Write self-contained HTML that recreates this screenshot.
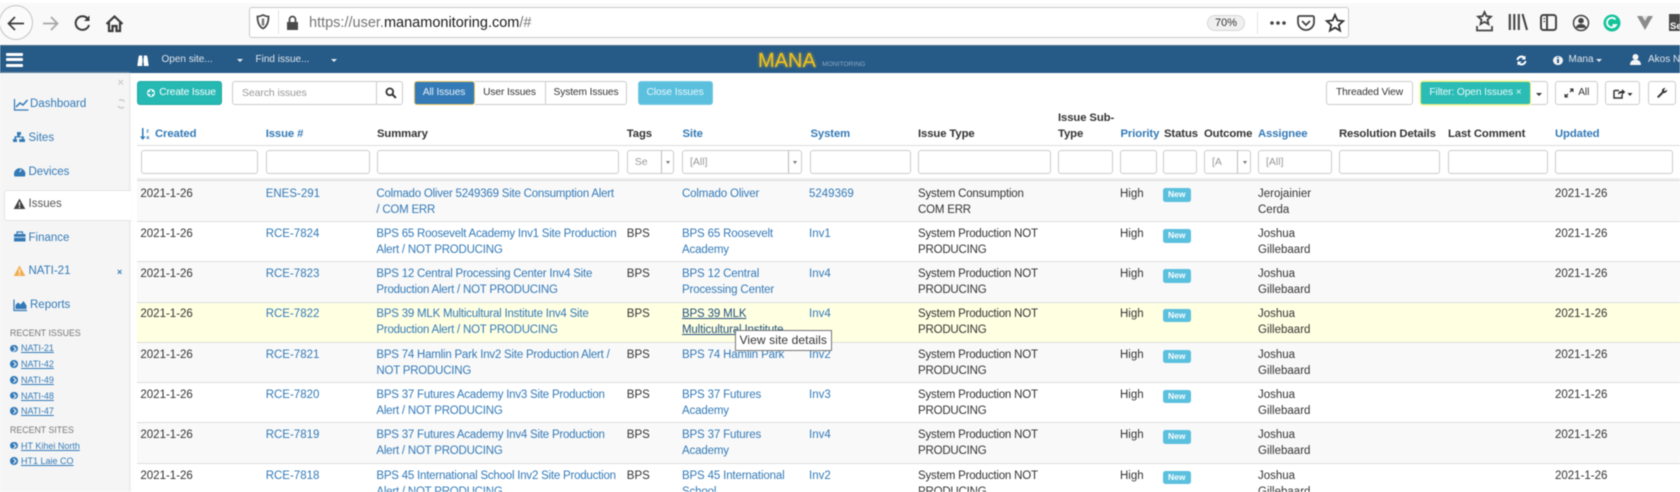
<!DOCTYPE html>
<html><head><meta charset="utf-8"><title>MANA Monitoring</title>
<style>
html,body{margin:0;padding:0;width:1680px;height:492px;overflow:hidden;background:#fff}
*{box-sizing:border-box}
#w{position:relative;width:1680px;height:492px;overflow:hidden;font-family:"Liberation Sans",sans-serif;font-size:11.5px;color:#333;filter:blur(.45px);background:#fff}
.a{position:absolute;white-space:nowrap}
svg{position:absolute;overflow:visible}
#tb{position:absolute;left:0;top:3px;width:1680px;height:42px;background:#f9f9f9}
#nav{position:absolute;left:0;top:45px;width:1680px;height:28px;background:#265a87;border-top:1px solid #4a6c88}
.nt{color:#dfe6ec;font-size:10px;top:54px;line-height:12px}
.car{position:absolute;width:0;height:0;border-left:3px solid transparent;border-right:3px solid transparent;border-top:3px solid #e6ecf1}
.btn{position:absolute;top:81px;height:24px;border:1px solid #ccc;border-radius:3px;background:#fff;font-size:10.2px;letter-spacing:-.1px;line-height:22px;text-align:center;color:#333;white-space:nowrap}
.th{position:absolute;font-weight:bold;font-size:11.3px;letter-spacing:-.1px;line-height:16.3px;white-space:nowrap;top:126px;color:#333}
.bl{color:#337ab7}
.f{position:absolute;top:150px;height:23.5px;border:1px solid #ccc;border-radius:3px;background:#fff;color:#999;font-size:10.5px;line-height:22px;padding-left:7px;white-space:nowrap;overflow:hidden}
.d{position:absolute;top:0;bottom:0;width:1px;background:#bbb}
.fc{position:absolute;top:10px;width:0;height:0;border-left:2.5px solid transparent;border-right:2.5px solid transparent;border-top:3px solid #777}
#sb{position:absolute;left:0;top:73px;width:129px;height:419px;background:#f5f5f5;box-shadow:1px 0 2px #ddd}
.n{position:absolute;left:30px;color:#337ab7;font-size:11.5px;line-height:14px;white-space:nowrap}
.h5{position:absolute;left:10px;font-size:8.8px;color:#777;line-height:10px;white-space:nowrap}
.rl{position:absolute;left:21px;font-size:9px;color:#337ab7;text-decoration:underline;line-height:10px;white-space:nowrap}
.o{position:absolute;left:10px;width:7.5px;height:7.5px;border-radius:50%;background:#337ab7}
.o:after{content:"";position:absolute;left:1.5px;top:2px;width:2.5px;height:2.5px;border-top:1px solid #fff;border-right:1px solid #fff;transform:rotate(45deg)}
.r{position:absolute;left:137px;width:1543px;border-top:1px solid #ddd}
.c{position:absolute;top:4px;line-height:16px;white-space:nowrap;color:#333}
.c1{left:3.4px}.c2{left:128.7px}.c3{left:239.4px;letter-spacing:-.22px}.c4{left:489.8px}.c5{left:545px;letter-spacing:-.15px}.c6{left:672px}.c7{left:781px;letter-spacing:-.2px}.c8{left:983px}.c10{left:1121px}.c11{left:1418px}
.l{color:#337ab7}
.nw{position:absolute;left:1026px;top:7px;width:27.5px;height:13.5px;border-radius:2.5px;background:#5bc0de;color:#fff;font-weight:bold;font-size:8.5px;line-height:13px;text-align:center}
</style></head><body><div id="w">

<div id="tb"></div>
<div class="a" style="left:-1px;top:5px;width:34px;height:35px;border-radius:50%;border:1px solid #c4c4c4;background:#fbfbfb"></div>
<svg style="left:0;top:0" width="140" height="46" fill="none" stroke="#3b3b3b" stroke-width="1.7">
<path d="M24 23.5H9M15 17l-6.500 6.500L15 30"/>
<path d="M43 23.500h14M51 17l6.500 6.500L51 30" stroke="#a6a6a6"/>
<path d="M87.500 18.500A6.800 6.800 0 1 0 89 25" stroke-width="2"/><path d="M89.500 15.500v5.500H84z" fill="#3b3b3b" stroke="none"/>
<path d="M106.500 24l8-7.500 8 7.500M109 22.500V31h3.500v-5h4v5h3.500v-8.500" stroke-width="2.200"/>
</svg>
<div class="a" style="left:248.500px;top:7px;width:1100px;height:30.500px;background:#fff;border:1px solid #c9c9c9;border-radius:3px"></div>
<svg style="left:256px;top:14px" width="16" height="18" fill="none" stroke="#4a4a4a" stroke-width="1.800"><path d="M1.500 2.500C4 2.500 6 1.500 7 1c1 .5 3 1.500 5.500 1.500 0 6-1.500 10-5.500 12C3 12.500 1.500 8.500 1.500 2.500z"/><path d="M7 4.500v7" stroke-width="2.500" stroke="#777"/></svg>
<div class="a" style="left:278px;top:10px;width:1px;height:24px;background:#e4e4e4"></div>
<svg style="left:286px;top:15px" width="13" height="16"><path d="M1 7h11v8H1z" fill="#4a4a4a"/><path d="M3.500 7V4.500a3 3 0 0 1 6 0V7" fill="none" stroke="#4a4a4a" stroke-width="1.700"/></svg>
<div class="a" style="left:309px;top:14px;font-size:14.500px;line-height:18px;color:#757575">https://user.<span style="color:#1c1c1c">manamonitoring.com</span>/#</div>
<div class="a" style="left:1207px;top:14.500px;width:38px;height:16.500px;border:1px solid #d6d6d6;border-radius:9px;background:#f0f0f0;text-align:center;font-size:11px;line-height:15px;color:#333">70%</div>
<div class="a" style="left:1257px;top:12px;width:1px;height:22px;background:#e4e4e4"></div>
<svg style="left:1266px;top:10px" width="85" height="26"><circle cx="6" cy="13" r="1.800" fill="#444"/><circle cx="12" cy="13" r="1.800" fill="#444"/><circle cx="18" cy="13" r="1.800" fill="#444"/>
<path d="M33.500 6h13a1.500 1.500 0 0 1 1.500 1.500V12a8 8 0 0 1-16 0V7.500A1.500 1.500 0 0 1 33.500 6z" fill="none" stroke="#444" stroke-width="1.800"/><path d="M36 11l4 4 4-4" fill="none" stroke="#444" stroke-width="1.800"/>
<path d="M69 5l2.400 5.400 5.800.6-4.400 3.900 1.300 5.800L69 17.700l-5.100 3 1.300-5.800-4.400-3.900 5.800-.6z" fill="none" stroke="#333" stroke-width="1.800"/></svg>
<svg style="left:1470px;top:8px" width="210" height="30" fill="none" stroke="#444" stroke-width="1.700">
<path d="M14.500 4l1.900 4.200 4.500.5-3.400 3 1 4.500-4-2.300-4 2.300 1-4.500-3.400-3 4.500-.5z" stroke-width="1.800"/><path d="M7 18v4.500h15V18" stroke-width="1.800"/>
<path d="M39.800 6v16M44.300 6v16M48.800 6v16M52.500 6l4.500 16" stroke-width="2.100"/>
<rect x="71" y="7" width="15" height="15" rx="2.500" stroke-width="2"/><path d="M77 7v15" stroke-width="2"/><path d="M73.500 10.500H75M73.500 13.500H75" stroke-width="1.200"/>
<circle cx="111" cy="15" r="7.500" stroke-width="1.500"/><circle cx="111" cy="12.700" r="2.800" fill="#444" stroke="none"/><path d="M105.500 20c1-3 3-4 5.500-4s4.500 1 5.500 4z" fill="#444" stroke="none"/>
<circle cx="142" cy="15" r="8.500" fill="#15c39a" stroke="none"/><path d="M145.500 11.500A4.800 4.800 0 1 0 146 17h-3.500" stroke="#fff" stroke-width="1.800"/>
<path d="M167 8h16l-8 14z" fill="#8b8b8b" stroke="none"/><path d="M172 8h6l-3 5z" fill="#e6e6e6" stroke="none"/>
<rect x="199" y="6" width="14" height="17" fill="#4a4a4a" stroke="none"/>
</svg>
<div class="a" style="left:1670px;top:22px;font-size:9.500px;line-height:10px;font-weight:bold;color:#fff">Se</div>

<div id="nav"></div>
<div class="a" style="left:6px;top:52.500px;width:17px;height:3px;background:#fff;border-radius:1px"></div>
<div class="a" style="left:6px;top:58px;width:17px;height:3px;background:#fff;border-radius:1px"></div>
<div class="a" style="left:6px;top:63.500px;width:17px;height:3px;background:#fff;border-radius:1px"></div>
<svg style="left:137px;top:55px" width="12" height="12" fill="#fff"><path d="M.3 11L1.300 3.500 2 .5h3.200v2.700h.3V8h-.3v3zM11.700 11L10.700 3.500 10 .5H6.800v2.700h-.3V8h.3v3z"/></svg>
<div class="a nt" style="left:161.500px">Open site...</div><div class="car" style="left:236.500px;top:59px"></div>
<div class="a nt" style="left:255.500px">Find issue...</div><div class="car" style="left:330.500px;top:59px"></div>
<div class="a" style="left:758px;top:48.500px;font-size:20px;line-height:24px;color:#f2c318;text-shadow:0 0 3px #c9a93a">MANA</div>
<div class="a" style="left:822px;top:60px;font-size:6.700px;line-height:9px;color:#8ba8c1">MONITORING</div>
<svg style="left:1516px;top:55px" width="11" height="11" fill="none" stroke="#fff" stroke-width="2"><path d="M1.500 5a4 4 0 0 1 7-2M9.500 6a4 4 0 0 1-7 2"/><path d="M9.500 .5v4h-4zM1.500 10.500v-4h4z" fill="#fff" stroke="none"/></svg>
<div class="a" style="left:1553px;top:55.500px;width:9.500px;height:9.500px;border-radius:50%;background:#f2f2f2"></div>
<div class="a" style="left:1557.200px;top:57px;width:1.400px;height:1.400px;background:#265a87"></div>
<div class="a" style="left:1557.200px;top:59.200px;width:1.400px;height:4px;background:#265a87"></div>
<div class="a nt" style="left:1568.500px">Mana</div><div class="car" style="left:1596px;top:59px"></div>
<svg style="left:1630px;top:54px" width="11" height="11" fill="#f4f4f4"><circle cx="5.500" cy="3" r="3"/><path d="M0 11c0-3 1.500-4.500 3.500-5h4c2 .5 3.500 2 3.500 5z"/></svg>
<div class="a nt" style="left:1648px">Akos N</div>

<div id="sb">
<div class="a" style="left:117.500px;top:4px;font-size:11px;line-height:12px;color:#cfcfcf;font-weight:bold">×</div>
<div class="n" style="top:24px">Dashboard</div>
<div class="n" style="top:57.500px;left:28.500px">Sites</div>
<div class="n" style="top:91.500px;left:28.500px">Devices</div>
<div class="n" style="top:158px;left:28.500px">Finance</div>
<div class="n" style="top:191px;left:28.500px">NATI-21</div>
<div class="n" style="top:225px">Reports</div>
<div class="a" style="left:117px;top:194px;font-size:9px;line-height:10px;color:#337ab7;font-weight:bold">×</div>
<div class="h5" style="top:255px">RECENT ISSUES</div>
<div class="o" style="top:271.500px"></div><div class="rl" style="top:270px">NATI-21</div>
<div class="o" style="top:287px"></div><div class="rl" style="top:285.500px">NATI-42</div>
<div class="o" style="top:303px"></div><div class="rl" style="top:302px">NATI-49</div>
<div class="o" style="top:318.500px"></div><div class="rl" style="top:317.500px">NATI-48</div>
<div class="o" style="top:334px"></div><div class="rl" style="top:333px">NATI-47</div>
<div class="h5" style="top:352px">RECENT SITES</div>
<div class="o" style="top:368.500px"></div><div class="rl" style="top:367.500px">HT Kihei North</div>
<div class="o" style="top:384px"></div><div class="rl" style="top:383px">HT1 Laie CO</div>
</div>
<div class="a" style="left:3.500px;top:189.500px;width:127px;height:31.500px;background:#fff;border:1px solid #e4e4e4;border-right:none;border-radius:3px 0 0 3px"></div>
<div class="a" style="left:28.500px;top:197px;font-size:11.500px;line-height:14px;color:#555">Issues</div>
<svg style="left:0;top:75px" width="130" height="245">
<path d="M14.500 24v11h14" fill="none" stroke="#337ab7" stroke-width="1.200"/><path d="M16 32l4-4 3 2 4.500-5" fill="none" stroke="#337ab7" stroke-width="1.500"/>
<path d="M119 25.500a4 4 0 0 1 5.500 1M124 32a4 4 0 0 1-6-1" fill="none" stroke="#ccc" stroke-width="1.500"/>
<path d="M17 57h4v3h-1.300v1.500h4V64H25v3h-4v-3h1v-1.500h-6V64h1v3h-4v-3h1.500v-2.700h2.800V60H17zM19.300 64H23v3h-3.700z" fill="#337ab7"/>
<path d="M14 99a5.700 5.700 0 1 1 11.400 0c0 1-.2 1.700-.6 2.500h-10.200c-.4-.8-.6-1.500-.6-2.500z" fill="#337ab7"/><path d="M19.700 97l1.500-2.500" stroke="#fff" stroke-width="1"/>
<path d="M19.500 123.500l5.800 10.500H13.700z" fill="#444"/><path d="M19.500 127v4" stroke="#fff" stroke-width="1.100"/><circle cx="19.500" cy="132.500" r=".7" fill="#fff"/>
<path d="M14 159h11.500v7.500H14z" fill="#337ab7"/><path d="M17 159v-2h5.500v2" fill="none" stroke="#337ab7" stroke-width="1.200"/><path d="M14 162.300h11.500" stroke="#f5f5f5" stroke-width=".8"/>
<path d="M19.500 190.500l5.800 10.500H13.700z" fill="#f0ad4e"/><path d="M19.500 194v4" stroke="#fff" stroke-width="1.100"/><circle cx="19.500" cy="199.500" r=".7" fill="#fff"/>
<path d="M14 224.500v11h13" fill="none" stroke="#337ab7" stroke-width="1.200"/><path d="M15.500 234v-4l2.500-2.500 2.500 2 3-3.500 3 4.500v3.500z" fill="#337ab7"/>
</svg>

<div class="btn" style="left:137px;width:85px;background:#26b9b4;border-color:#22a8a3;color:#fff;padding-left:16px">Create Issue</div>
<div class="a" style="left:146.500px;top:88.500px;width:8.500px;height:8.500px;border-radius:50%;background:#fff"></div>
<div class="a" style="left:150px;top:90px;width:1.500px;height:5.500px;background:#26b9b4"></div>
<div class="a" style="left:148px;top:92px;width:5.500px;height:1.500px;background:#26b9b4"></div>
<div class="btn" style="left:232px;width:171px;text-align:left;padding-left:9px;color:#999;font-size:10.500px">Search issues</div>
<div class="a" style="left:375.500px;top:81px;width:1px;height:24px;background:#ccc"></div>
<svg style="left:385px;top:87px" width="12" height="12" fill="none" stroke="#333" stroke-width="1.800"><circle cx="4.800" cy="4.800" r="3.400"/><path d="M7.500 7.500l3.400 3.400" stroke-width="2"/></svg>
<div class="btn" style="left:413.500px;width:61px;background:#337ab7;border-color:#e8c35d;color:#e8f1f8">All Issues</div>
<div class="btn" style="left:474.500px;width:71px;border-left:none;border-radius:0">User Issues</div>
<div class="btn" style="left:545px;width:82px;border-radius:0 3px 3px 0">System Issues</div>
<div class="btn" style="left:637.500px;width:75px;background:#5bc0de;border-color:#7cc9e0;color:#e9f7fb">Close Issues</div>

<div class="btn" style="left:1326px;width:87px">Threaded View</div>
<div class="btn" style="left:1420px;width:111px;background:#2bbcb6;border-color:#e4ec7a;color:#e8f9f8;box-shadow:0 0 2px #e9ef76">Filter: Open Issues ×</div>
<div class="btn" style="left:1531px;width:16.500px;border-left:none;border-radius:0 3px 3px 0"></div>
<div class="car" style="left:1536px;top:93px;border-top-color:#333"></div>
<div class="btn" style="left:1555px;width:42.500px;padding-left:15px">All</div>
<svg style="left:1564px;top:87.500px" width="10" height="10" fill="none" stroke="#333" stroke-width="1.300"><path d="M1 9l3-3M6 4l3-3"/><path d="M.5 5.500v4h4zM9.500 4.500v-4h-4z" fill="#333" stroke="none"/></svg>
<div class="btn" style="left:1605px;width:35px"></div>
<svg style="left:1613px;top:88px" width="20" height="11"><path d="M1 2.500h5M1 2.500v7.500h8V6.500" fill="none" stroke="#333" stroke-width="1.500"/><path d="M5 7c0-3 1.500-4 4-4V1l3.300 3L9 7V5.300c-2 0-3 .5-4 1.700z" fill="#333"/><path d="M14.500 5h5l-2.500 3z" fill="#333"/></svg>
<div class="btn" style="left:1647.500px;width:28.500px"></div>
<svg style="left:1656px;top:87px" width="12" height="12"><path d="M9.500 1a3 3 0 0 0-3.500 3.800L1 9.700 2.500 11l5-5A3 3 0 0 0 11 2.500L9 4.300 7.800 3.100z" fill="#333"/></svg>

<svg style="left:139px;top:127px" width="12" height="14" fill="#337ab7"><path d="M3 1h1.500v8.500H6.500L3.700 13 1 9.500h2z"/><text x="7.200" y="5.500" font-size="5.500" font-weight="bold" font-family="Liberation Sans">z</text><text x="7.200" y="12" font-size="5.500" font-weight="bold" font-family="Liberation Sans">a</text></svg>
<div class="th bl" style="left:155px">Created</div>
<div class="th bl" style="left:265.700px">Issue #</div>
<div class="th" style="left:377px">Summary</div>
<div class="th" style="left:626.800px">Tags</div>
<div class="th bl" style="left:682.500px">Site</div>
<div class="th bl" style="left:810.500px">System</div>
<div class="th" style="left:918px">Issue Type</div>
<div class="th" style="left:1058px;top:110px">Issue Sub-<br>Type</div>
<div class="th bl" style="left:1120.500px">Priority</div>
<div class="th" style="left:1164px">Status</div>
<div class="th" style="left:1204px">Outcome</div>
<div class="th bl" style="left:1258px">Assignee</div>
<div class="th" style="left:1339px">Resolution Details</div>
<div class="th" style="left:1448px">Last Comment</div>
<div class="th bl" style="left:1555px">Updated</div>
<div class="a" style="left:137px;top:145px;width:1543px;height:1px;background:#ddd"></div>

<div class="f" style="left:141px;width:117px"></div>
<div class="f" style="left:266px;width:103.500px"></div>
<div class="f" style="left:376.500px;width:242px"></div>
<div class="f" style="left:626.800px;width:47.500px">Se<div class="d" style="left:33px"></div><div class="fc" style="left:38.500px"></div></div>
<div class="f" style="left:682px;width:120px">[All]<div class="d" style="left:104.500px"></div><div class="fc" style="left:110px"></div></div>
<div class="f" style="left:810px;width:100.700px"></div>
<div class="f" style="left:918px;width:132.700px"></div>
<div class="f" style="left:1058px;width:54.500px"></div>
<div class="f" style="left:1120px;width:36.800px"></div>
<div class="f" style="left:1163px;width:33.800px"></div>
<div class="f" style="left:1204px;width:46.700px">[A<div class="d" style="left:32px"></div><div class="fc" style="left:37.500px"></div></div>
<div class="f" style="left:1258px;width:73.800px">[All]</div>
<div class="f" style="left:1339px;width:101px"></div>
<div class="f" style="left:1448px;width:99.500px"></div>
<div class="f" style="left:1555px;width:117.500px"></div>
<div class="a" style="left:137px;top:177.500px;width:1543px;height:2.500px;background:#eee"></div>

<div class="r" style="top:180px;height:41.300px;background:#f9f9f9">
<div class="c c1" style="top:4.500px">2021-1-26</div><div class="c c2 l" style="top:4.500px">ENES-291</div><div class="c c3 l" style="top:4.500px">Colmado Oliver 5249369 Site Consumption Alert<br>/ COM ERR</div><div class="c c5 l" style="top:4.500px">Colmado Oliver</div><div class="c c6 l" style="top:4.500px">5249369</div><div class="c c7" style="top:4.500px">System Consumption<br>COM ERR</div><div class="c c8" style="top:4.500px">High</div><div class="nw">New</div><div class="c c10" style="top:4.500px">Jerojainier<br>Cerda</div><div class="c c11" style="top:4.500px">2021-1-26</div>
</div>
<div class="r" style="top:221.300px;height:40px;background:#fff">
<div class="c c1">2021-1-26</div><div class="c c2 l">RCE-7824</div><div class="c c3 l">BPS 65 Roosevelt Academy Inv1 Site Production<br>Alert / NOT PRODUCING</div><div class="c c4">BPS</div><div class="c c5 l">BPS 65 Roosevelt<br>Academy</div><div class="c c6 l">Inv1</div><div class="c c7">System Production NOT<br>PRODUCING</div><div class="c c8">High</div><div class="nw">New</div><div class="c c10">Joshua<br>Gillebaard</div><div class="c c11">2021-1-26</div>
</div>
<div class="r" style="top:261.300px;height:40.700px;background:#f9f9f9">
<div class="c c1">2021-1-26</div><div class="c c2 l">RCE-7823</div><div class="c c3 l">BPS 12 Central Processing Center Inv4 Site<br>Production Alert / NOT PRODUCING</div><div class="c c4">BPS</div><div class="c c5 l">BPS 12 Central<br>Processing Center</div><div class="c c6 l">Inv4</div><div class="c c7">System Production NOT<br>PRODUCING</div><div class="c c8">High</div><div class="nw">New</div><div class="c c10">Joshua<br>Gillebaard</div><div class="c c11">2021-1-26</div>
</div>
<div class="r" style="top:302px;height:39.700px;background:#ffffe2">
<div class="c c1" style="top:3px">2021-1-26</div><div class="c c2 l" style="top:3px">RCE-7822</div><div class="c c3 l" style="top:3px">BPS 39 MLK Multicultural Institute Inv4 Site<br>Production Alert / NOT PRODUCING</div><div class="c c4" style="top:3px">BPS</div><div class="c c5" style="top:3px;color:#23527c;text-decoration:underline">BPS 39 MLK<br>Multicultural Institute</div><div class="c c6 l" style="top:3px">Inv4</div><div class="c c7" style="top:3px">System Production NOT<br>PRODUCING</div><div class="c c8" style="top:3px">High</div><div class="nw" style="top:5.500px">New</div><div class="c c10" style="top:3px">Joshua<br>Gillebaard</div><div class="c c11" style="top:3px">2021-1-26</div>
</div>
<div class="r" style="top:341.700px;height:40px;background:#f9f9f9">
<div class="c c1">2021-1-26</div><div class="c c2 l">RCE-7821</div><div class="c c3 l">BPS 74 Hamlin Park Inv2 Site Production Alert /<br>NOT PRODUCING</div><div class="c c4">BPS</div><div class="c c5 l">BPS 74 Hamlin Park</div><div class="c c6 l">Inv2</div><div class="c c7">System Production NOT<br>PRODUCING</div><div class="c c8">High</div><div class="nw">New</div><div class="c c10">Joshua<br>Gillebaard</div><div class="c c11">2021-1-26</div>
</div>
<div class="r" style="top:381.700px;height:40.600px;background:#fff">
<div class="c c1">2021-1-26</div><div class="c c2 l">RCE-7820</div><div class="c c3 l">BPS 37 Futures Academy Inv3 Site Production<br>Alert / NOT PRODUCING</div><div class="c c4">BPS</div><div class="c c5 l">BPS 37 Futures<br>Academy</div><div class="c c6 l">Inv3</div><div class="c c7">System Production NOT<br>PRODUCING</div><div class="c c8">High</div><div class="nw">New</div><div class="c c10">Joshua<br>Gillebaard</div><div class="c c11">2021-1-26</div>
</div>
<div class="r" style="top:422.300px;height:40.400px;background:#f9f9f9">
<div class="c c1">2021-1-26</div><div class="c c2 l">RCE-7819</div><div class="c c3 l">BPS 37 Futures Academy Inv4 Site Production<br>Alert / NOT PRODUCING</div><div class="c c4">BPS</div><div class="c c5 l">BPS 37 Futures<br>Academy</div><div class="c c6 l">Inv4</div><div class="c c7">System Production NOT<br>PRODUCING</div><div class="c c8">High</div><div class="nw">New</div><div class="c c10">Joshua<br>Gillebaard</div><div class="c c11">2021-1-26</div>
</div>
<div class="r" style="top:462.700px;height:40px;background:#fff">
<div class="c c1">2021-1-26</div><div class="c c2 l">RCE-7818</div><div class="c c3 l">BPS 45 International School Inv2 Site Production<br>Alert / NOT PRODUCING</div><div class="c c4">BPS</div><div class="c c5 l">BPS 45 International<br>School</div><div class="c c6 l">Inv2</div><div class="c c7">System Production NOT<br>PRODUCING</div><div class="c c8">High</div><div class="nw">New</div><div class="c c10">Joshua<br>Gillebaard</div><div class="c c11">2021-1-26</div>
</div>

<div class="a" style="left:734.500px;top:330px;width:97.500px;height:20.700px;background:#fff;border:1px solid #767676;font-size:12px;line-height:19px;text-align:center;color:#333;letter-spacing:.1px">View site details</div>
</div></body></html>
